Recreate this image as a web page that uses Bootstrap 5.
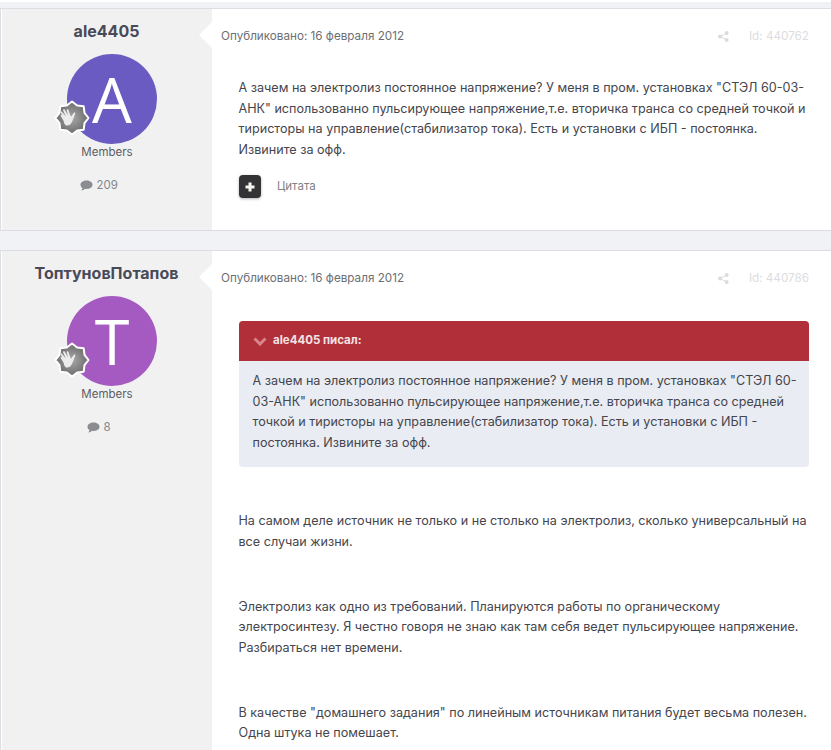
<!DOCTYPE html>
<html lang="ru">
<head>
  <meta charset="UTF-8">
  <meta name="viewport" content="width=device-width, initial-scale=1">
  <title>Форум</title>
  <link href="https://cdn.jsdelivr.net/npm/bootstrap@5.3.3/dist/css/bootstrap.min.css" rel="stylesheet">
  <style>
    html, body {
      height: 750px;
      overflow: hidden;
    }

    body {
      background-color: #f1f2f5;
      border-top: 2px solid #fff;
      font-family: Inter, "Liberation Sans", sans-serif;
      font-size: 12.6px;
      color: #45454d;
    }

    .topic-post {
      background-color: #fff;
      border: 1px solid #dcdde3;
      border-right: 0;
    }

    .post-one {
      margin-top: 6px;
      margin-bottom: 19px;
      height: 223px;
    }

    .post-two {
      height: 500px;
      border-bottom: 0;
    }

    .author-col {
      width: 210px;
      flex: none;
      background-color: #f1f1f2;
      margin-left: 1px;
      text-align: center;
    }

    .author-name {
      font-size: 16px;
      font-weight: 700;
      line-height: 20px;
      color: #494a58;
      margin: 12px 1px 13px 0;
    }

    .avatar-wrap {
      position: relative;
      width: 90px;
      height: 90px;
      margin: 0 auto;
      left: 5px;
    }

    .avatar-circle {
      width: 90px;
      height: 90px;
      border-radius: 50%;
      color: #fff;
      font-size: 63px;
      line-height: 90px;
      font-family: "Open Sans", sans-serif;
    }

    .avatar-a { background-color: #6a5bc2; }
    .avatar-t { background-color: #a55ac2; }

    .rank-badge {
      position: absolute;
      left: -13px;
      top: 46px;
    }

    .member-group {
      font-size: 11.5px;
      line-height: 14px;
      color: #5c5d63;
      margin-top: 1px;
    }

    .post-count {
      font-size: 11.5px;
      line-height: 14px;
      color: #85868a;
      margin-top: 19px;
      padding-right: 16px;
    }

    .post-main {
      position: relative;
      flex: 1;
      min-width: 0;
      padding: 0 22px 0 9px;
    }

    .post-main::before {
      content: "";
      position: absolute;
      left: -13px;
      top: 13px;
      border-style: solid;
      border-width: 13px 13px 13px 0;
      border-color: transparent #fff transparent transparent;
    }

    .post-meta {
      height: 20px;
      margin-top: 18px;
      font-size: 11.7px;
      color: #6d6e73;
    }

    .post-id {
      color: #dcdcdf;
      margin-left: 20px;
    }

    .post-text {
      margin-left: 17.5px;
      line-height: 20.5px;
    }

    .post-text p {
      margin: 0;
    }

    .post-text p + p {
      margin-top: 44.5px;
    }

    .first-text {
      margin-top: 31px;
    }

    .post-actions {
      margin: 15px 0 0 18px;
      gap: 16px;
    }

    .plus-btn {
      width: 22px;
      height: 23px;
      padding: 0;
      border-radius: 4px;
      background-color: #333336;
      box-shadow: 0 1px 3px rgba(0, 0, 0, .3);
    }

    .quote-link {
      font-size: 11.5px;
      color: #808186;
    }

    .quote-box {
      margin: 32px 0 0 18px;
      background-color: #e9ecf2;
      border-radius: 4px;
      overflow: hidden;
    }

    .quote-head {
      height: 40px;
      background-color: #b12f39;
      color: #f3e3e4;
      font-size: 11.5px;
      font-weight: 700;
      padding-left: 14px;
      gap: 6px;
    }

    .quote-text {
      padding: 10px 10px 14px 13.5px;
      line-height: 20.5px;
    }

    .reply-text {
      margin-top: 44px;
    }
  </style>
</head>
<body>

  <div class="topic-post post-one d-flex">
    <div class="author-col">
      <div class="author-name">ale4405</div>
      <div class="avatar-wrap">
        <div class="avatar-circle avatar-a">A</div>
        <svg class="rank-badge" width="36" height="36" viewBox="0 0 36 36">
          <use href="#rank-shape"></use>
        </svg>
      </div>
      <div class="member-group">Members</div>
      <div class="post-count">
        <svg width="13" height="11" viewBox="0 0 13 11"><path d="M6.500 .5c3.300 0 6 1.800 6 4.200s-2.700 4.200-6 4.200c-.6 0-1.100-.1-1.600-.2C4 9.600 2.800 10.300 1.200 10.500c.7-.7 1.200-1.500 1.300-2.400C1.300 7.300.5 6.100.5 4.700.5 2.300 3.200.5 6.500.5z" fill="#8b8c90"/></svg>
        209
      </div>
    </div>
    <div class="post-main">
      <div class="post-meta d-flex align-items-center justify-content-between">
        <span>Опубликовано: 16 февраля 2012</span>
        <span class="d-flex align-items-center">
          <svg width="11" height="11" viewBox="0 0 11 11"><circle cx="8.700" cy="2" r="1.900" fill="#dadade"/><circle cx="2" cy="5.500" r="1.900" fill="#dadade"/><circle cx="8.700" cy="9" r="1.900" fill="#dadade"/><path d="M8.700 2 2 5.500 8.700 9" stroke="#dadade" fill="none"/></svg>
          <span class="post-id">Id: 440762</span>
        </span>
      </div>
      <div class="post-text first-text">
        <p>А зачем на электролиз постоянное напряжение? У меня в пром. установках "СТЭЛ 60-03-АНК" использованно пульсирующее напряжение,т.е. вторичка транса со средней точкой и тиристоры на управление(стабилизатор тока). Есть и установки с ИБП - постоянка. Извините за офф.</p>
      </div>
      <div class="d-flex align-items-center post-actions">
        <button class="btn plus-btn d-flex align-items-center justify-content-center" type="button" aria-label="Добавить">
          <svg width="10" height="10" viewBox="0 0 10 10"><path d="M5 .5v9M.5 5h9" stroke="#f5f5ef" stroke-width="3"/></svg>
        </button>
        <span class="quote-link">Цитата</span>
      </div>
    </div>
  </div>

  <div class="topic-post post-two d-flex">
    <div class="author-col">
      <div class="author-name">ТоптуновПотапов</div>
      <div class="avatar-wrap">
        <div class="avatar-circle avatar-t">T</div>
        <svg class="rank-badge" width="36" height="36" viewBox="0 0 36 36">
          <use href="#rank-shape"></use>
        </svg>
      </div>
      <div class="member-group">Members</div>
      <div class="post-count">
        <svg width="13" height="11" viewBox="0 0 13 11"><path d="M6.500 .5c3.300 0 6 1.800 6 4.200s-2.700 4.200-6 4.200c-.6 0-1.100-.1-1.600-.2C4 9.600 2.800 10.300 1.200 10.500c.7-.7 1.200-1.500 1.300-2.400C1.300 7.300.5 6.100.5 4.700.5 2.300 3.200.5 6.500.5z" fill="#8b8c90"/></svg>
        8
      </div>
    </div>
    <div class="post-main">
      <div class="post-meta d-flex align-items-center justify-content-between">
        <span>Опубликовано: 16 февраля 2012</span>
        <span class="d-flex align-items-center">
          <svg width="11" height="11" viewBox="0 0 11 11"><circle cx="8.700" cy="2" r="1.900" fill="#dadade"/><circle cx="2" cy="5.500" r="1.900" fill="#dadade"/><circle cx="8.700" cy="9" r="1.900" fill="#dadade"/><path d="M8.700 2 2 5.500 8.700 9" stroke="#dadade" fill="none"/></svg>
          <span class="post-id">Id: 440786</span>
        </span>
      </div>
      <div class="quote-box">
        <div class="quote-head d-flex align-items-center">
          <svg width="14" height="9" viewBox="0 0 14 9"><path d="M1.500 1.500 7 7l5.500-5.500" stroke="#d9858c" stroke-width="3" fill="none"/></svg>
          <span>ale4405 писал:</span>
        </div>
        <div class="quote-text">А зачем на электролиз постоянное напряжение? У меня в пром. установках "СТЭЛ 60-03-АНК" использованно пульсирующее напряжение,т.е. вторичка транса со средней точкой и тиристоры на управление(стабилизатор тока). Есть и установки с ИБП - постоянка. Извините за офф.</div>
      </div>
      <div class="post-text reply-text">
        <p>На самом деле источник не только и не столько на электролиз, сколько универсальный на все случаи жизни.</p>
        <p>Электролиз как одно из требований. Планируются работы по органическому электросинтезу. Я честно говоря не знаю как там себя ведет пульсирующее напряжение. Разбираться нет времени.</p>
        <p>В качестве "домашнего задания" по линейным источникам питания будет весьма полезен. Одна штука не помешает.</p>
      </div>
    </div>
  </div>

  <svg width="0" height="0" class="d-block">
    <defs>
      <radialGradient id="rank-fill">
        <stop offset="0" stop-color="#a8a8a8"/>
        <stop offset="1" stop-color="#6c6c6c"/>
      </radialGradient>
      <g id="rank-shape">
        <path d="M18 1.500 23.200 5.500 29.700 6.300 30.500 12.800 34.500 18 30.500 23.200 29.700 29.700 23.200 30.500 18 34.500 12.800 30.500 6.300 29.700 5.500 23.200 1.500 18 5.500 12.800 6.300 6.300 12.800 5.500z" fill="url(#rank-fill)" stroke="#fff" stroke-width="2" stroke-linejoin="round"/>
        <path transform="rotate(-12 18 18) translate(-4.500 -4.500) scale(1.250)" d="M11 19l-1.500-4.500c-.2-.8 1-1.200 1.300-.4l1.500 3-2.300-5c-.3-.8.9-1.300 1.300-.5l2.300 4.400-1.300-5.300c-.2-.9 1.100-1.200 1.400-.3l1.700 5-.3-4.300c0-.9 1.300-1 1.400-.1l.8 5.800 3-2.500c.7-.6 1.500.3.900 1l-3.400 5.200c-1.300 2-2.700 3-4.500 2.700-1.500-.3-2-1.300-2.300-2.700z" fill="#ececec"/>
      </g>
    </defs>
  </svg>

</body>
</html>
